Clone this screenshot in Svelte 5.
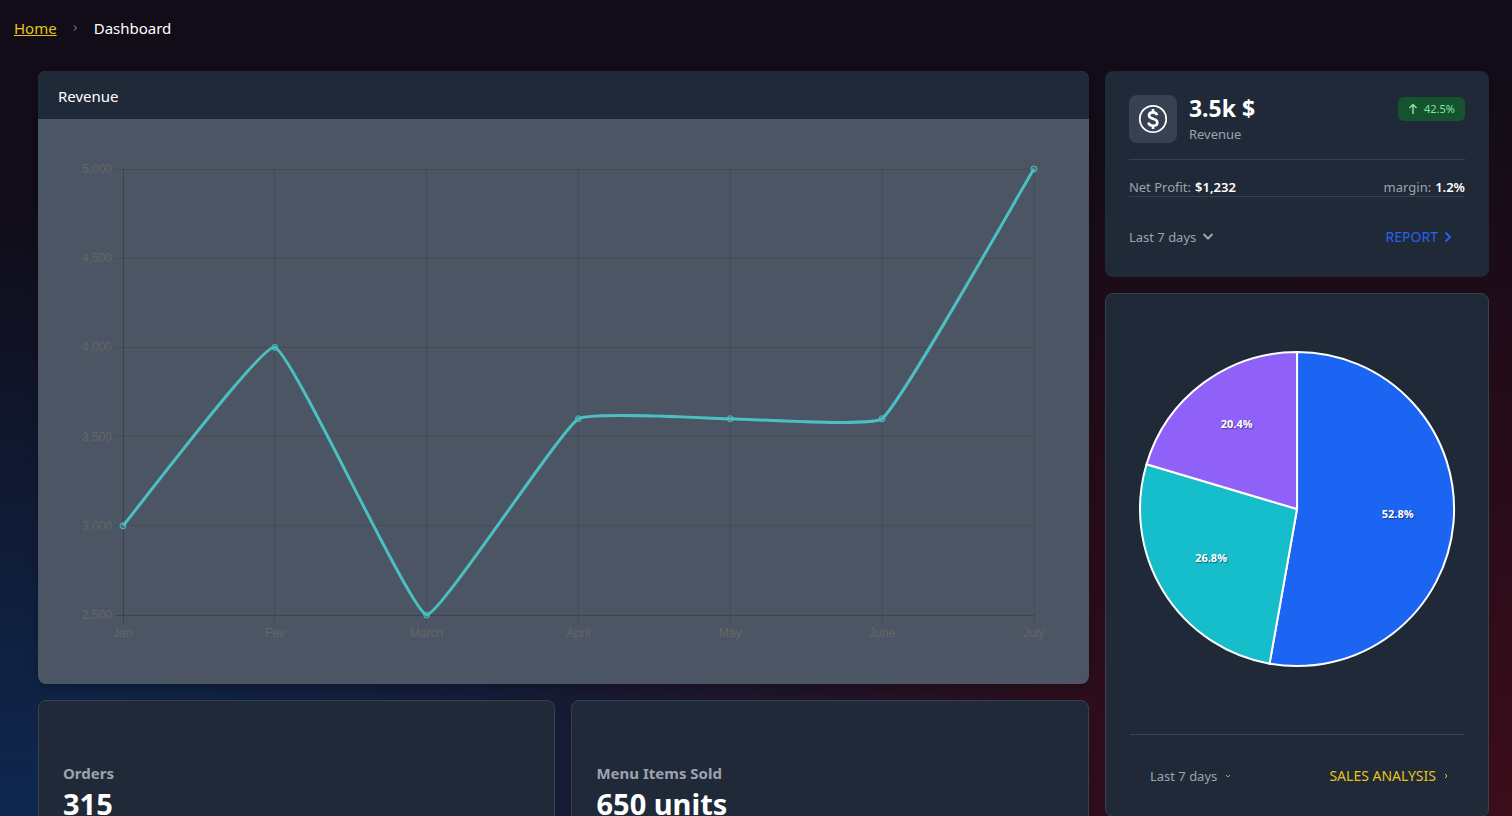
<script>
  const labels = ['Jan', 'Fev', 'March', 'April', 'May', 'June', 'July'];
  const values = [3000, 4000, 2500, 3600, 3600, 3600, 5000];
  const ticks = [5000, 4500, 4000, 3500, 3000, 2500];

  const left = 65;
  const right = 976;
  const top = 30;
  const bottom = 476;
  const tension = 0.1;

  const xAt = (i) => left + (i * (right - left)) / (labels.length - 1);
  const yAt = (v) => bottom - ((v - 2500) / 2500) * (bottom - top);
  const crisp = (n) => Math.floor(n) + 0.5;
  const points = values.map((v, i) => ({ x: xAt(i), y: yAt(v) }));

  function controls(i) {
    const cur = points[i];
    const prev = points[i - 1] ?? cur;
    const next = points[i + 1] ?? cur;
    const before = Math.hypot(cur.x - prev.x, cur.y - prev.y);
    const after = Math.hypot(next.x - cur.x, next.y - cur.y);
    const a = (tension * before) / (before + after);
    const b = (tension * after) / (before + after);
    const clamp = (y) => Math.min(bottom, Math.max(top, y));
    return {
      inX: cur.x - a * (next.x - prev.x),
      inY: clamp(cur.y - a * (next.y - prev.y)),
      outX: cur.x + b * (next.x - prev.x),
      outY: clamp(cur.y + b * (next.y - prev.y))
    };
  }

  const line = points
    .map((p, i) => {
      if (i === 0) return `M${p.x} ${p.y}`;
      const from = controls(i - 1);
      const to = controls(i);
      return `C${from.outX} ${from.outY} ${to.inX} ${to.inY} ${p.x} ${p.y}`;
    })
    .join(' ');

  const radius = 157;
  const shares = [
    { value: 52.8, color: '#1c64f2' },
    { value: 26.8, color: '#16bdca' },
    { value: 20.4, color: '#9061f9' }
  ];
  let start = 0;
  const slices = shares.map((s) => {
    const from = (start / 100) * Math.PI * 2;
    start += s.value;
    const to = (start / 100) * Math.PI * 2;
    const mid = (from + to) / 2;
    const large = to - from > Math.PI ? 1 : 0;
    const at = (angle, r) => [Math.sin(angle) * r, -Math.cos(angle) * r];
    const [x1, y1] = at(from, radius);
    const [x2, y2] = at(to, radius);
    const [lx, ly] = at(mid, 101);
    return {
      ...s,
      lx,
      ly,
      d: `M0 0L${x1} ${y1}A${radius} ${radius} 0 ${large} 1 ${x2} ${y2}Z`
    };
  });

  const cards = [
    { title: 'Orders', value: '315' },
    { title: 'Menu Items Sold', value: '650 units' }
  ];
</script>

<div class="page">
  <nav class="crumbs" aria-label="Breadcrumb">
    <a href="#home">Home</a>
    <svg width="5" height="6" viewBox="0 0 5 6" aria-hidden="true"><path d="M1 0.500L3.500 3L1 5.500" /></svg>
    <span>Dashboard</span>
  </nav>

  <main class="grid">
    <div class="main-column">
      <section class="revenue">
        <h2>Revenue</h2>
        <div class="plot">
          <svg viewBox="0 0 1011 525" role="img" aria-label="Revenue">
            {#each ticks as t}
              <line class="grid-line" class:axis={t === 2500} x1={left - 8} x2={right} y1={crisp(yAt(t))} y2={crisp(yAt(t))} />
              <text class="tick" text-anchor="end" x={left - 11} y={yAt(t) + 4}>{t.toLocaleString('en-US')}</text>
            {/each}
            {#each labels as label, i}
              <line class="grid-line" class:axis={i === 0} x1={crisp(xAt(i))} x2={crisp(xAt(i))} y1={top} y2={bottom + 8} />
              <text class="tick" text-anchor="middle" x={xAt(i)} y={bottom + 22}>{label}</text>
            {/each}
            <path class="line" d={line} />
            {#each points as p}
              <circle class="dot" cx={p.x} cy={p.y} r="3" />
            {/each}
          </svg>
        </div>
      </section>

      <div class="pair">
        {#each cards as card}
          <section class="stat">
            <h3>{card.title}</h3>
            <strong>{card.value}</strong>
          </section>
        {/each}
      </div>
    </div>

    <div class="side-column">
      <section class="summary">
        <div class="head">
          <div class="coin">
            <svg width="30" height="30" viewBox="0 0 30 30" aria-hidden="true">
              <circle cx="15" cy="15" r="13.200" fill="none" stroke="#fff" stroke-width="1.800" />
              <path d="M19 11.200C18.600 9.300 17.100 8.400 15 8.400c-2.300 0-4 1.200-4 3.100 0 4.300 8.300 2.400 8.300 6.900 0 2.100-1.900 3.300-4.300 3.300s-4.200-1.100-4.500-3.200M15 5v3.400M15 21.600v3.400" fill="none" stroke="#fff" stroke-width="2.600" />
            </svg>
          </div>
          <div class="figure">
            <h5>3.5k $</h5>
            <p>Revenue</p>
          </div>
          <span class="badge">
            <svg width="10" height="12" viewBox="0 0 10 12" aria-hidden="true"><path d="M5 11V1.500M1.500 5L5 1.500L8.500 5" /></svg>
            42.5%
          </span>
        </div>
        <dl>
          <div><dt>Net Profit:</dt><dd>$1,232</dd></div>
          <div><dt>margin:</dt><dd>1.2%</dd></div>
        </dl>
        <div class="foot">
          <button type="button">Last 7 days
            <svg class="chev" width="12" height="8" viewBox="0 0 12 8" aria-hidden="true"><path d="M1.500 1L6 5.500L10.500 1" /></svg>
          </button>
          <a href="#report">REPORT
            <svg class="chev" width="8" height="12" viewBox="0 0 8 12" aria-hidden="true"><path d="M1.500 1.500L6 6L1.500 10.500" /></svg>
          </a>
        </div>
      </section>

      <section class="sales">
        <svg class="pie" viewBox="-167 -167 334 334" role="img" aria-label="Sales share">
          {#each slices as s}
            <path d={s.d} fill={s.color} />
          {/each}
          {#each slices as s}
            <text x={s.lx} y={s.ly}>{s.value}%</text>
          {/each}
        </svg>
        <div class="sales-foot">
          <button type="button">Last 7 days
            <svg width="6" height="5" viewBox="0 0 6 5" aria-hidden="true"><path d="M1 1l2 2l2-2" /></svg>
          </button>
          <a href="#sales">SALES ANALYSIS
            <svg width="5" height="6" viewBox="0 0 5 6" aria-hidden="true"><path d="M1 1l2 2l-2 2" /></svg>
          </a>
        </div>
      </section>
    </div>
  </main>
</div>

<style>
  :global(body) {
    margin: 0;
    background: #110c17;
  }
  .page, .page * { box-sizing: border-box; }
  h2, h3, h5, p, dl, dd { margin: 0; }
  .page {
    height: 100vh;
    overflow-y: auto;
    scrollbar-width: none;
    font-family: "Noto Sans", "Open Sans", sans-serif;
    font-size: 15px;
    line-height: 24px;
    color: #fff;
    background:
      radial-gradient(ellipse at 0% 100%, #0f2850 0%, rgba(15, 40, 80, 0) 54%),
      radial-gradient(ellipse at 100% 100%, #3c0c1a 0%, rgba(60, 12, 26, 0) 64%),
      #110c17;
  }
  .crumbs {
    display: flex;
    align-items: center;
    gap: 16px;
    padding: 16px 14px;
  }
  .crumbs a { color: #e3c51c; }
  .crumbs svg path, .sales-foot svg path { fill: none; stroke: currentColor; stroke-width: 1; }
  .crumbs svg { color: #9ca3af; }
  .grid {
    display: grid;
    grid-template-columns: repeat(11, minmax(0, 1fr));
    gap: 16px;
    padding: 15px 23px 24px 38px;
  }
  .main-column { grid-column: span 8; }
  .side-column { grid-column: span 3; }
  .main-column, .side-column {
    display: flex;
    flex-direction: column;
    gap: 16px;
  }
  .revenue {
    overflow: hidden;
    border-radius: 8px;
    background: #4b5563;
    box-shadow: 0 4px 8px rgba(0, 0, 0, 0.2);
  }
  .revenue h2 {
    padding: 13px 20px 11px;
    font-size: 15px;
    font-weight: 400;
    background: #1f2937;
  }
  .plot { padding: 20px; }
  .plot svg { display: block; width: 100%; }
  .grid-line { stroke: rgba(0, 0, 0, 0.1); }
  .grid-line.axis { stroke: rgba(0, 0, 0, 0.22); }
  .tick { font: 12px "Liberation Sans", Arial, sans-serif; fill: #666; }
  .line { fill: none; stroke: #4bc0c0; stroke-width: 3; }
  .dot { fill: rgba(75, 192, 192, 0.2); stroke: #4bc0c0; stroke-width: 1; }
  .pair {
    display: grid;
    grid-template-columns: 1fr 1fr;
    gap: 16px;
  }
  .stat {
    padding: 60px 24px;
    border: 1px solid #374151;
    border-radius: 8px;
    background: #1f2937;
  }
  .stat h3 { font-size: 15px; line-height: 24px; color: #9ca3af; }
  .stat strong { display: block; font-size: 29px; line-height: 38px; }
  .summary {
    padding: 24px;
    border-radius: 8px;
    background: #1f2937;
    font-size: 13px;
    line-height: 18px;
    color: #9ca3af;
  }
  .head {
    display: flex;
    align-items: flex-start;
    padding-bottom: 16px;
    border-bottom: 1px solid #374151;
  }
  .coin {
    display: grid;
    place-items: center;
    width: 48px;
    height: 48px;
    margin-right: 12px;
    border-radius: 8px;
    background: #374151;
  }
  .figure { flex: 1; }
  .figure h5 { margin-bottom: 4px; font-size: 23px; line-height: 26px; color: #fff; }
  .badge {
    display: flex;
    align-items: center;
    gap: 6px;
    height: 24px;
    margin-top: 2px;
    padding: 0 10px;
    border-radius: 6px;
    background: #14532d;
    color: #84e1a8;
    font-size: 11px;
  }
  .badge path { fill: none; stroke: currentColor; stroke-width: 1.500; }
  dl {
    display: flex;
    justify-content: space-between;
    padding-top: 18px;
    border-bottom: 1px solid #374151;
  }
  dl div { display: flex; gap: 4px; }
  dd { font-weight: 600; color: #fff; }
  .foot {
    display: flex;
    align-items: center;
    justify-content: space-between;
    padding: 30px 0 6px;
    line-height: 20px;
  }
  button, .foot a, .sales-foot a {
    display: flex;
    align-items: center;
    gap: 6px;
    padding: 0;
    border: 0;
    background: none;
    font: inherit;
    color: #9ca3af;
    text-decoration: none;
  }
  .chev path { fill: none; stroke: currentColor; stroke-width: 2; }
  .foot a { padding-right: 13px; font-size: 14px; color: #2563eb; }
  .sales {
    padding: 48px 24px 20px;
    border: 1px solid #374151;
    border-radius: 8px;
    background: #1f2937;
    font-size: 13px;
    line-height: 20px;
  }
  .pie { display: block; width: 100%; }
  .pie path { stroke: #fff; stroke-width: 2; stroke-linejoin: round; }
  .pie text {
    font: 700 11px "Open Sans", sans-serif;
    fill: #fff;
    text-anchor: middle;
    text-shadow: 1px 1px 1px rgba(0, 0, 0, 0.45);
  }
  .sales-foot {
    display: flex;
    justify-content: space-between;
    margin-top: 58px;
    padding: 31px 15px 10px 20px;
    border-top: 1px solid #374151;
  }
  .sales-foot button, .sales-foot a { gap: 8px; }
  .sales-foot a { font-size: 14px; color: #e3c51c; }
</style>
